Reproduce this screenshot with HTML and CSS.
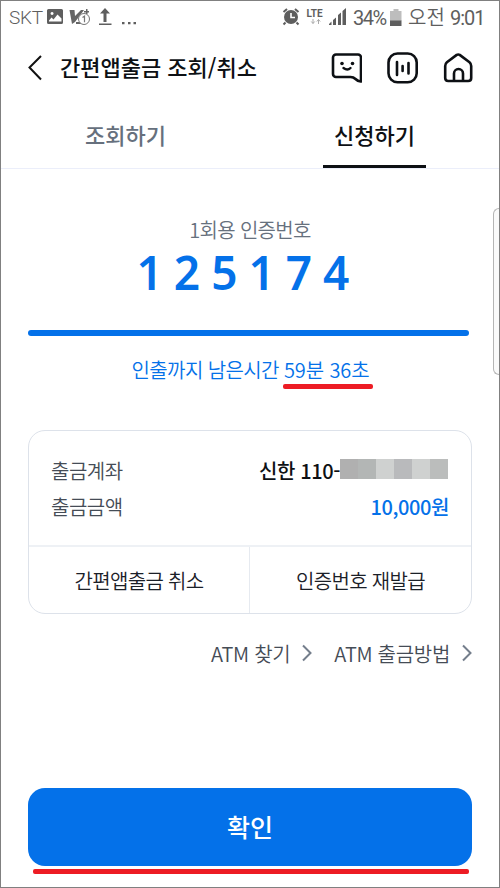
FILE: index.html
```html
<!DOCTYPE html>
<html lang="ko">
<head>
	<meta charset="UTF-8">
	<title>간편앱출금 조회/취소</title>
	<link rel="stylesheet" href="styles.css">
</head>
<body>
	<div class="phone">
		<div class="status">
			<span class="carrier">SKT</span>
			<svg class="st-left" width="92" height="20" viewBox="0 0 92 20">
				<path fill="#5e5e5e" fill-rule="evenodd" d="M1.500 1h13a1.500 1.500 0 0 1 1.500 1.500v12a1.500 1.500 0 0 1-1.500 1.500h-13a1.500 1.500 0 0 1-1.500-1.500v-12a1.500 1.500 0 0 1 1.500-1.500zM2 13.500h12.500v-3l-4-4-4 5-2-2-2.500 3zM5 4a1.500 1.500 0 1 0 .1 0z"/>
				<path fill="#666" d="M22.500 2h5l.5 6 6-6h3l-9 12-3 2z"/>
				<path fill="#666" d="M37 3h5v1.500h-5zM39 1h1.500v5h-1.500zM29 14h6v2h-6z"/>
				<circle cx="37" cy="11" r="5.500" fill="#fff" stroke="#777"/>
				<path d="M35.500 9.500l2-1.300v6" fill="none" stroke="#777" stroke-width="1.200"/>
				<path fill="#5e5e5e" d="M58 0l5 5.500h-3.500v8.500h-3v-8.500h-3.500zM52 15.500h12.500v1.500h-12.500z"/>
				<path fill="#5e5e5e" d="M75 14h2.500v2.300h-2.500zM81 14h2.500v2.300h-2.500zM86.500 14h2.500v2.300h-2.500z"/>
			</svg>
			<span class="space"></span>
			<svg class="st-right" width="66" height="20" viewBox="0 0 66 20">
				<circle cx="9" cy="9" r="7" fill="#5e5e5e"/>
				<path d="M1.500 4l3.500-3M16.500 4l-3.500-3M3.500 14.500l-2 2M14.500 14.500l2 2" stroke="#5e5e5e" stroke-width="2"/>
				<path d="M9 5v4.500h4" fill="none" stroke="#fff" stroke-width="1.600"/>
				<text class="lte" x="24.500" y="9">LTE</text>
				<path d="M31 11v4.500M29.300 13.500l1.700 2 1.700-2M36.500 16v-4.500M34.800 13.500l1.700-2 1.700 2" fill="none" stroke="#aaa"/>
				<path fill="#5e5e5e" d="M47 17v-1l2.500-2.500v3.500zM51 17v-5l3-2.500v7.500zM56 17v-10l3-2.500v12.500zM60.500 17v-14l3.500-3v17z"/>
			</svg>
			<span class="percent">34%</span>
			<svg class="battery" width="12" height="18" viewBox="0 0 12 18">
				<path fill="#bdbdbd" d="M3.500 0h5v2h3v10h-11.500v-10h3.500z"/>
				<path fill="#5e5e5e" d="M0 11.500h11.500v5.500h-11.500z"/>
			</svg>
			<span class="ampm">오전</span>
			<span class="clock">9:01</span>
		</div>

		<div class="header">
			<svg class="back" width="14" height="26" viewBox="0 0 14 26"><path d="M13 1L1.500 12.500 13 24.500" fill="none" stroke="#111" stroke-width="2"/></svg>
			<h1>간편앱출금 조회/취소</h1>
			<svg class="h-icon" width="32" height="32" viewBox="0 0 32 32" fill="none" stroke="#0d1014" stroke-width="2.600" stroke-linejoin="round">
				<path d="M6 2.500h22a3 3 0 0 1 3 3v24c-2 .2-4-1-5.500-2.500s-3-2-5-2h-14.500a3 3 0 0 1-3-3v-16.500a3 3 0 0 1 3-3z"/>
				<path d="M13.500 16q4 3 7 0" stroke-linecap="round" stroke-width="2.400"/>
				<circle cx="12" cy="11.500" r="1.800" fill="#0d1014" stroke="none"/>
				<circle cx="22.500" cy="11.500" r="1.800" fill="#0d1014" stroke="none"/>
			</svg>
			<svg class="h-icon" width="32" height="32" viewBox="0 0 32 32" fill="none" stroke="#0d1014" stroke-width="2.600" stroke-linecap="round">
				<rect x="2.500" y="1.500" width="28.200" height="28.800" rx="9"/>
				<path d="M11 10v13M16.600 14v5M22.500 11v10.500" stroke-width="2.600"/>
			</svg>
			<svg class="h-icon" width="32" height="32" viewBox="0 0 32 32" fill="none" stroke="#0d1014" stroke-width="2.600" stroke-linejoin="round">
				<path d="M14.700 2.900a3 3 0 0 1 3 0l9.800 7.300q1.700 1.400 1.700 3.800v12q0 3-3 3h-20q-3 0-3-3v-12q0-2.400 1.700-3.800z"/>
				<path d="M12 29v-7.500a4.500 4.500 0 0 1 9 0v7.500"/>
			</svg>
		</div>

		<ul class="tabul">
			<li><span>조회하기</span></li>
			<li class="on"><span>신청하기</span></li>
		</ul>

		<div class="code">
			<p class="code-label">1회용 인증번호</p>
			<p class="code-num">125174</p>
			<div class="bar"></div>
			<p class="remain">인출까지 남은시간 <span class="mark">59분 36초</span></p>
		</div>

		<div class="card">
			<div class="info">
				<div class="row">
					<span class="name">출금계좌</span>
					<span class="account">신한 110-</span>
					<span class="mask"><i></i><i></i><i></i><i></i><i></i><i></i></span>
				</div>
				<div class="row">
					<span class="name">출금금액</span>
					<span class="amount">10,000원</span>
				</div>
			</div>
			<div class="btns">
				<span>간편앱출금 취소</span>
				<span>인증번호 재발급</span>
			</div>
		</div>

		<div class="links">
			<span>ATM 찾기</span>
			<svg class="arrow" width="10" height="18" viewBox="0 0 10 18"><path d="M1 1.500l7.500 7.500L1 16.500" fill="none" stroke="#747e8c" stroke-width="2"/></svg>
			<span class="how">ATM 출금방법</span>
			<svg class="arrow" width="10" height="18" viewBox="0 0 10 18"><path d="M1 1.500l7.500 7.500L1 16.500" fill="none" stroke="#747e8c" stroke-width="2"/></svg>
		</div>

		<div class="surebtn">확인</div>
		<div class="redline"></div>
		<div class="handle"></div>
	</div>
</body>
</html>
```
FILE: styles.css
```css
*{
	box-sizing: border-box;
}
body,h1,p,ul,li{
	margin: 0;
	padding: 0;
	list-style: none;
}
.phone{
	position: relative;
	display: flex;
	flex-direction: column;
	width: 500px;
	height: 888px;
	border: 1px solid #808080;
	background-color: #fff;
	font-family: "Noto Sans CJK KR", sans-serif;
	font-size: 20px;
	font-weight: 350;
	overflow: hidden;
}
.status{
	display: flex;
	align-items: center;
	height: 34px;
	padding: 0 15px 0 8px;
	color: #5e5e5e;
	font-family: Roboto, "Noto Sans CJK KR", sans-serif;
	line-height: 34px;
	white-space: nowrap;
}
.carrier{
	width: 38px;
	font-size: 19px;
	letter-spacing: -0.3px;
}
.space{
	flex: 1;
}
.lte{
	font: 700 10px Roboto, sans-serif;
	fill: #5e5e5e;
}
.percent{
	margin-left: 5px;
	width: 37px;
	font-size: 20px;
	font-weight: 400;
	letter-spacing: -1.5px;
}
.ampm{
	margin-left: 6px;
	width: 42px;
	font-size: 20px;
}
.clock{
	width: 34px;
	font-size: 20px;
	font-weight: 400;
	letter-spacing: -1px;
}
.header{
	display: flex;
	align-items: center;
	height: 66px;
	padding: 0 25px 1px 27px;
}
h1{
	flex: 1;
	margin-left: 18px;
	padding-bottom: 3px;
	font-size: 22px;
	font-weight: 500;
	color: #0d1014;
}
.h-icon{
	margin-left: 24px;
}
.tabul{
	display: flex;
	height: 68px;
	border-bottom: 1px solid #ebeefa;
}
.tabul li{
	flex: 1;
	display: flex;
	justify-content: center;
	font-size: 22px;
	font-weight: 500;
	line-height: 66px;
	color: #66707d;
}
.tabul .on span{
	height: 67px;
	padding: 0 11px;
	border-bottom: 3px solid #0d1014;
	color: #0d1014;
}
.code{
	height: 261px;
	padding: 46px 30px 0 27px;
	text-align: center;
}
.code-label{
	padding-left: 3px;
	line-height: 30px;
	letter-spacing: -0.7px;
	color: #66707d;
}
.code-num{
	height: 85px;
	font-family: "Noto Sans", sans-serif;
	font-size: 46px;
	font-weight: 600;
	line-height: 54px;
	letter-spacing: 11px;
	color: #0471e9;
}
.bar{
	height: 6px;
	border-radius: 3px;
	background-color: #0471e9;
}
.remain{
	margin-top: 19px;
	padding-left: 4px;
	line-height: 30px;
	letter-spacing: -0.6px;
	color: #0471e9;
}
.mark{
	position: relative;
	letter-spacing: -0.1px;
}
.mark:after{
	content: '';
	position: absolute;
	left: -1px;
	right: -3px;
	bottom: -5px;
	height: 5px;
	border-radius: 2px;
	background-color: #ed1c24;
}
.card{
	height: 184px;
	margin: 0 27px;
	border: 1px solid #dde2ea;
	border-radius: 17px;
}
.info{
	height: 116px;
	padding: 21px 23px 0 22px;
	border-bottom: 2px solid #eef1f5;
}
.row{
	display: flex;
	align-items: center;
	height: 36px;
	letter-spacing: -0.5px;
	color: #454c56;
}
.name{
	flex: 1;
}
.account,.amount{
	font-weight: 500;
	letter-spacing: -0.4px;
	color: #0d1014;
}
.amount{
	margin-right: -1px;
	color: #0471e9;
}
.mask{
	display: flex;
	width: 108px;
	height: 20px;
	margin-top: -3px;
}
.mask i{
	flex: 1;
	background-color: #b0b0b0;
}
.mask i:nth-child(2){
	background-color: #b3b6b5;
}
.mask i:nth-child(3){
	background-color: #cfd1d0;
}
.mask i:nth-child(4){
	background-color: #b9babc;
}
.mask i:nth-child(5){
	background-color: #cfd1d0;
}
.mask i:nth-child(6){
	background-color: #bbbdbc;
}
.btns{
	display: flex;
	height: 66px;
}
.btns span{
	flex: 1;
	text-align: center;
	line-height: 67px;
	letter-spacing: -0.7px;
	color: #1b2028;
}
.btns span:first-child{
	flex: none;
	width: 221px;
	border-right: 1px solid #e6eaf0;
}
.links{
	display: flex;
	align-items: center;
	justify-content: flex-end;
	height: 78px;
	padding-right: 27px;
	letter-spacing: -0.3px;
	color: #454c56;
}
.arrow{
	margin-left: 12px;
}
.how{
	margin-left: 22px;
}
.surebtn{
	height: 78px;
	margin: 96px 27px 0;
	border-radius: 17px;
	background-color: #0471e9;
	color: #fff;
	font-size: 25px;
	font-weight: 500;
	line-height: 77px;
	text-align: center;
}
.redline{
	height: 5px;
	margin: 3px 30px 0 32px;
	border-radius: 2px;
	background-color: #ed1c24;
}
/* 화면 오른쪽 엣지 패널 */
.handle{
	position: absolute;
	top: 207px;
	right: -1px;
	width: 7px;
	height: 167px;
	border: 1px solid #b5b5b5;
	border-right: none;
	border-radius: 6px 0 0 6px;
	background-color: #fafafa;
}
```
